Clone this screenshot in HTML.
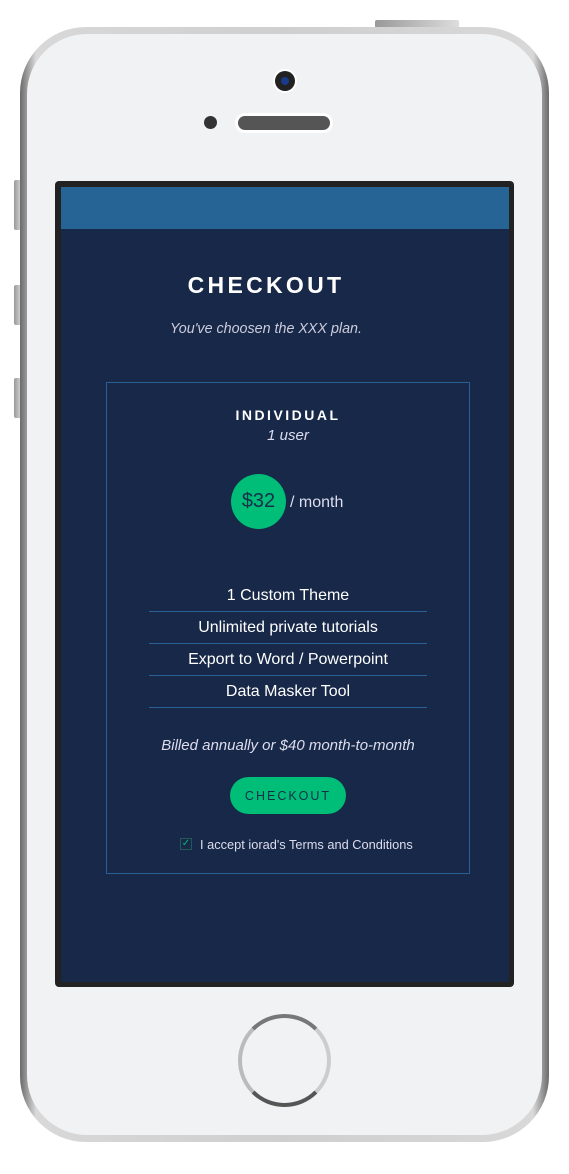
<!DOCTYPE html>
<html><head><style>
*{margin:0;padding:0;box-sizing:border-box}
body{width:569px;height:1174px;background:#fff;position:relative;overflow:hidden;font-family:"Liberation Sans",sans-serif}
.abs{position:absolute}
.phone{left:20px;top:27px;width:529px;height:1115px;border-radius:66px;background:linear-gradient(90deg,#6a6a6a,#d8d8d8 3%,#cfcfcf 50%,#d8d8d8 97%,#6a6a6a)}
.face{left:27px;top:34px;width:515px;height:1101px;border-radius:60px;background:#f1f2f4}
.btn{background:linear-gradient(90deg,#999,#ddd);border-radius:2px}
.screen{left:55px;top:181px;width:459px;height:806px;background:#222;border-radius:4px}
.inner{left:61px;top:187px;width:448px;height:795px;background:#172848}
.hdr{left:61px;top:187px;width:448px;height:42px;background:#276496}
.c{text-align:center;color:#fff}
.feat{left:149px;width:278px;height:32px;line-height:32px;border-bottom:1px solid #2a5f96;font-size:16px;color:#fff;text-align:center}
</style></head><body>
<div class="abs btn" style="left:375px;top:20px;width:84px;height:8px"></div>
<div class="abs btn" style="left:14px;top:180px;width:8px;height:50px"></div>
<div class="abs btn" style="left:14px;top:285px;width:8px;height:40px"></div>
<div class="abs btn" style="left:14px;top:378px;width:8px;height:40px"></div>
<div class="abs phone"></div>
<div class="abs face"></div>
<div class="abs" style="left:275px;top:71px;width:20px;height:20px;border-radius:50%;background:#222;box-shadow:0 0 0 2px #fff"><div style="margin:6px;width:8px;height:8px;border-radius:50%;background:#1a3a8a"></div></div>
<div class="abs" style="left:204px;top:116px;width:13px;height:13px;border-radius:50%;background:#333"></div>
<div class="abs" style="left:238px;top:116px;width:92px;height:14px;border-radius:7px;background:#555;box-shadow:0 0 0 3px #fff"></div>
<div class="abs screen"></div>
<div class="abs inner"></div>
<div class="abs hdr"></div>
<div class="abs c" style="left:61px;width:410px;top:272px;font-size:23px;font-weight:bold;letter-spacing:3.3px">CHECKOUT</div>
<div class="abs c" style="left:61px;width:410px;top:321px;font-size:14.3px;font-style:italic;color:#ccd">You've choosen the XXX plan.</div>
<div class="abs" style="left:106px;top:382px;width:364px;height:492px;border:1px solid #2a5f96"></div>
<div class="abs c" style="left:106px;width:364px;top:407px;font-size:14px;font-weight:bold;letter-spacing:2.5px">INDIVIDUAL</div>
<div class="abs c" style="left:106px;width:364px;top:427px;font-size:15px;font-style:italic;color:#dde">1 user</div>
<div class="abs" style="left:231px;top:474px;width:55px;height:55px;border-radius:50%;background:#00bd78;color:#17304a;font-size:20px;text-align:center;line-height:55px">$32</div>
<div class="abs" style="left:290px;top:494px;font-size:16px;color:#dde">/ month</div>
<div class="abs feat" style="top:580px">1 Custom Theme</div>
<div class="abs feat" style="top:612px">Unlimited private tutorials</div>
<div class="abs feat" style="top:644px">Export to Word / Powerpoint</div>
<div class="abs feat" style="top:676px">Data Masker Tool</div>
<div class="abs c" style="left:106px;width:364px;top:737px;font-size:15px;font-style:italic;color:#dde">Billed annually or $40 month-to-month</div>
<div class="abs" style="left:230px;top:777px;width:116px;height:37px;border-radius:19px;background:#00bd78;color:#17304a;font-size:12.5px;letter-spacing:2px;text-align:center;line-height:39px">CHECKOUT</div>
<div class="abs" style="left:180px;top:838px;width:12px;height:12px;border:1px solid #1f5a55;color:#00bd78;font-size:10px;line-height:10px;text-align:center">✓</div>
<div class="abs" style="left:200px;top:837px;font-size:12.8px;color:#dde">I accept iorad's Terms and Conditions</div>
<div class="abs" style="left:238px;top:1014px;width:93px;height:93px;border-radius:50%;border:4px solid #999;border-top-color:#777;border-right-color:#ccc;border-bottom-color:#555;border-left-color:#bbb"></div>
</body></html>
